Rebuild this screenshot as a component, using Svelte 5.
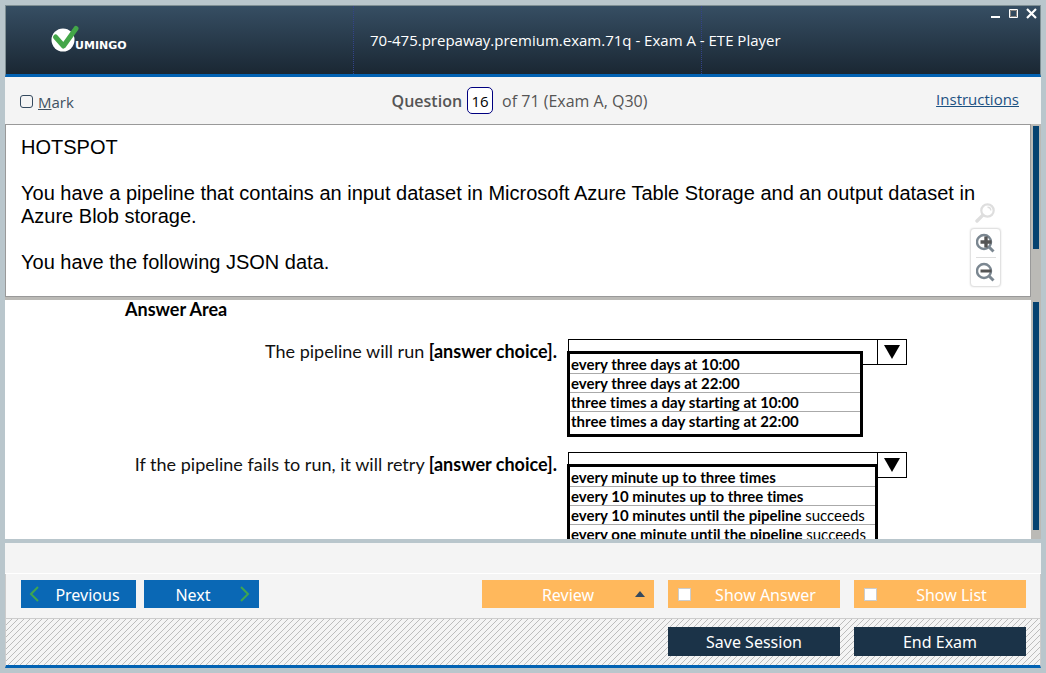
<script>
  const questions = [
    {
      id: 'run',
      label: 'The pipeline will run',
      wide: false,
      options: [
        ['every three days at 10:00', ''],
        ['every three days at 22:00', ''],
        ['three times a day starting at 10:00', ''],
        ['three times a day starting at 22:00', '']
      ]
    },
    {
      id: 'retry',
      label: 'If the pipeline fails to run, it will retry',
      wide: true,
      options: [
        ['every minute up to three times', ''],
        ['every 10 minutes up to three times', ''],
        ['every 10 minutes until the pipeline', 'succeeds'],
        ['every one minute until the pipeline', 'succeeds']
      ]
    }
  ];
  let answers = $state({ run: '', retry: '' });
  let marked = $state(false);
  let showAnswer = $state(false);
  let showList = $state(false);
  let current = $state('16');
</script>

<div class="window">
  <header class="titlebar">
    <div class="brand">
      <svg class="logo" viewBox="0 0 80 28" width="80" height="28" role="img" aria-label="Vumingo">
        <circle cx="12" cy="15" r="11.5" fill="#fff" />
        <path d="M4.5 12 L12.5 21 L25 3.5" fill="none" stroke="#43a648" stroke-width="5" stroke-linecap="round" stroke-linejoin="round" />
        <text x="24" y="24" class="wordmark">UMINGO</text>
      </svg>
    </div>
    <h1 class="title">70-475.prepaway.premium.exam.71q - Exam A - ETE Player</h1>
    <div class="controls">
      <button aria-label="Minimize"><svg viewBox="0 0 11 11" width="11" height="11"><path d="M1 8h9v2H1z" fill="#fff" /></svg></button>
      <button aria-label="Maximize"><svg viewBox="0 0 11 11" width="11" height="11"><path d="M1.5 1.5h8v8h-8z" fill="none" stroke="#fff" /><path d="M2.5 2.5h6v6h-6z" fill="none" stroke="#8a8580" /></svg></button>
      <button aria-label="Close"><svg viewBox="0 0 11 11" width="11" height="11"><path d="M1 1l9 9M10 1l-9 9" stroke="#fff" stroke-width="2.2" /></svg></button>
    </div>
  </header>

  <div class="toolbar">
    <label class="mark"><input type="checkbox" bind:checked={marked} /><span><u>M</u>ark</span></label>
    <div class="position">
      <label for="number">Question</label>
      <input id="number" type="text" bind:value={current} />
      <span>of 71 (Exam A, Q30)</span>
    </div>
    <a class="instructions" href="#instructions">Instructions</a>
  </div>

  <section class="pane question">
    <div class="text">
      <p>HOTSPOT</p>
      <p>You have a pipeline that contains an input dataset in Microsoft Azure Table Storage and an output dataset in Azure Blob storage.</p>
      <p>You have the following JSON data.</p>
      <div class="zoom">
        <svg class="lens" viewBox="0 0 20 20" width="20" height="20"><circle cx="12.5" cy="7.5" r="6.2" fill="none" stroke="#dedede" stroke-width="2.2" /><path d="M12.5 4.2a3.3 3.3 0 0 1 3.3 3.3" fill="none" stroke="#dedede" stroke-width="1.4" /><path d="M7.6 12.4L2 18" stroke="#dedede" stroke-width="3.4" stroke-linecap="round" /></svg>
        <div class="zoombox">
          <button aria-label="Zoom in"><svg viewBox="0 0 20 20" width="20" height="20"><circle cx="8" cy="9" r="7" fill="none" stroke="#7b8791" stroke-width="2.4" /><path d="M13 14l4.5 4.5" stroke="#7b8791" stroke-width="3" /><path d="M10 3.5v11M4.5 9h11" stroke="#555" stroke-width="3.4" /></svg></button>
          <button aria-label="Zoom out"><svg viewBox="0 0 20 20" width="20" height="20"><circle cx="8" cy="9" r="7" fill="none" stroke="#7b8791" stroke-width="2.4" /><path d="M13 14l4.5 4.5" stroke="#7b8791" stroke-width="3" /><path d="M4.5 9h11" stroke="#555" stroke-width="3" /></svg></button>
        </div>
      </div>
    </div>
    <div class="track"><div class="thumb upper"></div></div>
  </section>

  <section class="pane answer">
    <div class="area">
      <h2>Answer Area</h2>
      {#each questions as q (q.id)}
        <div class="row">
          <label for={q.id}>{q.label} <b>[answer choice].</b></label>
          <div class="combo">
            <select id={q.id} bind:value={answers[q.id]}>
              <option value=""></option>
              {#each q.options as [a, b]}<option value={a}>{a} {b}</option>{/each}
            </select>
            <span class="arrow"><svg viewBox="0 0 16 14" width="16" height="14"><path d="M0 0h16L8 14z" /></svg></span>
            <ul class="menu" class:wide={q.wide}>
              {#each q.options as [a, b]}
                <li><button onclick={() => (answers[q.id] = a)}>{a} <span>{b}</span></button></li>
              {/each}
            </ul>
          </div>
        </div>
      {/each}
    </div>
    <div class="track"><div class="thumb lower"></div></div>
  </section>

  <div class="status"></div>

  <nav class="bar">
    <button class="btn blue"><svg viewBox="0 0 10 16" width="10" height="16"><path d="M9 1L2 8l7 7" /></svg><span>Previous</span></button>
    <button class="btn blue"><span>Next</span><svg viewBox="0 0 10 16" width="10" height="16"><path d="M1 1l7 7-7 7" /></svg></button>
    <span class="spacer"></span>
    <button class="btn orange"><span>Review</span><i class="up"></i></button>
    <label class="btn orange"><input type="checkbox" bind:checked={showAnswer} /><span>Show Answer</span></label>
    <label class="btn orange"><input type="checkbox" bind:checked={showList} /><span>Show List</span></label>
  </nav>
  <footer class="bar hatch">
    <span class="spacer"></span>
    <button class="btn navy"><span>Save Session</span></button>
    <button class="btn navy"><span>End Exam</span></button>
  </footer>
</div>

<style>
  :global(body) { margin: 0; background: #b9c6cc; }
  * { box-sizing: border-box; }
  button { font: inherit; color: inherit; border: 0; padding: 0; background: none; }
  .window {
    display: flex;
    flex-direction: column;
    height: 100vh;
    padding: 5px;
    font-family: "Open Sans", "Noto Sans", sans-serif;
  }
  .titlebar {
    display: grid;
    grid-template-columns: minmax(0, 348fr) minmax(0, 348fr) minmax(0, 338fr);
    height: 72px;
    flex: none;
    border: 1px solid #7f8f94;
    border-bottom: 3px solid #0262b3;
    background: linear-gradient(#364e63, #1a2733);
    color: #fff;
  }
  .brand { padding: 19px 45px; border-right: 1px dotted #33438a; }
  .logo { display: block; overflow: visible; }
  .wordmark { font: bold 11px "DejaVu Sans", sans-serif; fill: #fff; }
  .title { margin: 0; border-right: 1px dotted #33438a; padding-left: 16px; font-size: 15px; line-height: 68px; font-weight: 500; white-space: nowrap; }
  .controls { display: flex; justify-content: flex-end; gap: 7px; padding: 2px 3px; }
  .controls button { height: 11px; display: flex; }
  .toolbar {
    display: grid;
    grid-template-columns: 1fr auto 1fr;
    align-items: center;
    height: 47px;
    flex: none;
    padding: 0 22px 0 15px;
    background: #f4f4f4;
    color: #555;
    font-size: 16px;
  }
  .mark { display: flex; align-items: center; gap: 5px; font-size: 15px; color: #3f5161; padding-top: 2px; }
  .mark input { appearance: none; margin: 0; width: 13px; height: 13px; border: 1px solid #34495e; border-radius: 3px; }
  .position { display: flex; align-items: center; gap: 5px; }
  .position label { font-weight: 600; }
  .position input { width: 26px; height: 27px; padding: 0; margin-right: 4px; border: 1px solid #000080; border-radius: 5px; background: #fff; text-align: center; font: 15px "Open Sans", sans-serif; color: #000; }
  .instructions { justify-self: end; padding-bottom: 4px; color: #1c5182; font-size: 15px; font-weight: 500; }
  .pane { display: flex; min-height: 0; background: #fff; }
  .question { flex: 173 1 0; background: #bbbab6; }
  .text { position: relative; flex: 1; overflow: hidden; padding: 11px 50px 0 15px; border: 1px solid #999; background: #fff; font: 20px/23px "Liberation Sans", Arial, sans-serif; }
  .text p { margin: 0 0 23px; }
  .zoom { position: absolute; right: 29px; bottom: 9px; width: 31px; }
  .lens { display: block; margin: 0 5px 5px; }
  .zoombox { border: 1px solid #e2e2e2; border-radius: 4px; background: #fff; box-shadow: 0 0 2px #ddd; padding: 0 5px; }
  .zoombox button { display: grid; place-items: center; width: 20px; height: 28px; }
  .zoombox button + button { border-top: 1px solid #ddd; height: 29px; }
  .track { width: 10px; flex: none; padding: 2px; background: #bbbab6; }
  .thumb { background: #054270; }
  .upper { height: 73%; }
  .lower { height: 97%; }
  .answer { flex: 239 1 0; border-top: 3px solid #bbbab6; }
  .area { flex: 1; overflow: hidden; font: 18px/22px Lato, sans-serif; font-variant-ligatures: none; }
  h2 { margin: 0 0 21px 120px; font-size: 18px; line-height: 18px; }
  .row { display: flex; align-items: flex-start; height: 113px; }
  .row label { flex: 0 0 552px; text-align: right; padding-top: 1px; color: #111; }
  .row label b { color: #000; }
  .combo { position: relative; display: flex; width: 339px; height: 26px; margin-left: 11px; }
  .combo select { appearance: none; width: 100%; border: 1px solid #000; border-radius: 0; background: #fff; }
  .arrow { position: absolute; right: 0; top: 0; width: 30px; height: 26px; border: 1px solid #000; display: grid; place-items: center; pointer-events: none; }
  .menu { position: absolute; top: 12px; left: -1px; width: 296px; margin: 0; padding: 1px 0 4px; list-style: none; border: 3px solid #000; background: #fff; font-size: 15px; font-weight: 700; }
  .menu.wide { width: 311px; }
  .menu li + li { border-top: 1px solid #aaa; }
  .menu button { display: block; width: 100%; padding: 0 1px; text-align: left; line-height: 18px; white-space: nowrap; }
  .menu button span { font-weight: 400; }
  .status { flex: none; height: 35px; border-top: 4px solid #b9c6cc; border-bottom: 1px solid #fff; background: #f4f4f4; }
  .bar { display: flex; flex: none; gap: 14px; height: 44px; padding: 6px 14px 0 15px; border: solid #ccc; border-width: 0 1px; background: #f4f4f4; font: 16px "Noto Sans", sans-serif; }
  .spacer { flex: 1; }
  .btn { display: flex; align-items: center; justify-content: center; position: relative; width: 172px; height: 28px; color: #fff; }
  .blue { width: 115px; background: #0a68b5; }
  .blue + .blue { margin-left: -6px; }
  .blue svg { fill: none; stroke: #3fa650; stroke-width: 2; }
  .blue span { flex: 1; padding-top: 2px; }
  .blue:first-child { padding-left: 8px; }
  .blue + .blue { padding: 0 9px 0 2px; }
  .orange { background: #ffb85c; }
  .orange span { padding-top: 2px; }
  .up { position: absolute; right: 9px; top: 11px; border: solid transparent; border-width: 0 5px 6px; border-bottom-color: #34495e; }
  .orange input { appearance: none; flex: none; width: 13px; height: 13px; margin: 0 0 0 10px; border: 1px solid #ccc; background: #fff; }
  .orange input + span { flex: 1; text-align: center; }
  .hatch {
    height: 50px;
    padding-top: 8px;
    border-width: 1px 1px 0;
    border-bottom: 3px solid #0262b3;
    background: #f4f4f4 url("data:image/svg+xml,%3Csvg xmlns='http://www.w3.org/2000/svg' width='6' height='6' shape-rendering='crispEdges'%3E%3Cpath fill='%23bcbcbc' d='M0 5h1v1H0zM1 4h1v1H1zM2 3h1v1H2zM3 2h1v1H3zM4 1h1v1H4zM5 0h1v1H5z'/%3E%3C/svg%3E");
  }
  .navy { height: 29px; background: #1b3348; }
</style>
